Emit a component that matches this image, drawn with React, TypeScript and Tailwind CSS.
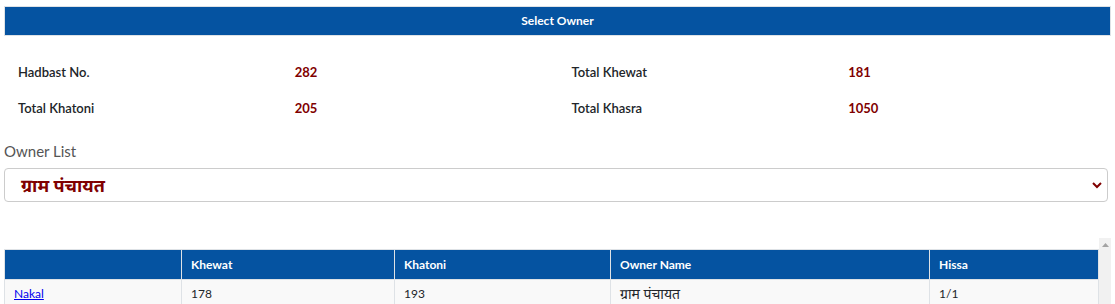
import React from "react";

const font = { fontFamily: '"Lato", "Liberation Sans", "Noto Sans Devanagari", "Noto Sans", sans-serif' };

function Info({ label, value }: { label: string; value: string }) {
  return (
    <>
      <div className="px-[14px] text-[13px] font-semibold text-[#212529]">{label}</div>
      <div className="px-[14px] text-[13px] font-bold text-[#800000]">{value}</div>
    </>
  );
}

export default function App() {
  return (
    <div className="w-[1115px] h-[304px] overflow-hidden bg-white" style={font}>
      <div className="pt-[6px] px-[4px]">
        <div className="h-[30px] bg-[#0553a1] border border-[#dee2e6] flex items-center justify-center text-white text-[12px] font-bold">
          Select Owner
        </div>
        <div className="grid grid-cols-4 gap-y-[19px] pt-[28px] leading-[17px]">
          <Info label="Hadbast No." value="282" />
          <Info label="Total Khewat" value="181" />
          <Info label="Total Khatoni" value="205" />
          <Info label="Total Khasra" value="1050" />
        </div>
        <div className="mt-[25px] text-[15px] text-[#555] leading-[18px]">Owner List</div>
        <div className="mt-[8px] mr-[3px] h-[34px] border border-[#ccc] rounded-[4px] flex items-center justify-between pl-[16px] pr-[4px]">
          <span className="text-[18px] font-bold text-[#800000]">ग्राम पंचायत</span>
          <svg width="12" height="12" viewBox="0 0 12 12">
            <path d="M2 4 L6 8 L10 4" fill="none" stroke="#800000" strokeWidth="2" />
          </svg>
        </div>
        <div className="mt-[36px] flex">
          <div className="w-[1096px] pt-[11px]">
            <table className="w-full border-collapse text-[12px]">
              <thead>
                <tr className="bg-[#0553a1] text-white h-[30px]">
                  <th className="w-[177px] border border-[#dee2e6] text-left px-[9px] font-bold"></th>
                  <th className="w-[213px] border border-[#dee2e6] text-left px-[9px] font-bold">Khewat</th>
                  <th className="w-[216px] border border-[#dee2e6] text-left px-[9px] font-bold">Khatoni</th>
                  <th className="w-[319px] border border-[#dee2e6] text-left px-[9px] font-bold">Owner Name</th>
                  <th className="border border-[#dee2e6] text-left px-[9px] font-bold">Hissa</th>
                </tr>
              </thead>
              <tbody>
                <tr className="bg-[#f9f9f9] h-[28px] text-[#212529]">
                  <td className="border border-[#dee2e6] px-[9px]">
                    <a href="#" className="text-[#0000ee] underline">Nakal</a>
                  </td>
                  <td className="border border-[#dee2e6] px-[9px]">178</td>
                  <td className="border border-[#dee2e6] px-[9px]">193</td>
                  <td className="border border-[#dee2e6] px-[9px] text-[14px]">ग्राम पंचायत</td>
                  <td className="border border-[#dee2e6] px-[9px]">1/1</td>
                </tr>
              </tbody>
            </table>
          </div>
          <div className="w-[12px] h-[80px] bg-[#f1f1f1] flex justify-center pt-[5px]">
            <svg width="7" height="4" viewBox="0 0 7 4">
              <path d="M0 4 L3.5 0 L7 4 Z" fill="#a3a3a3" />
            </svg>
          </div>
        </div>
      </div>
    </div>
  );
}
